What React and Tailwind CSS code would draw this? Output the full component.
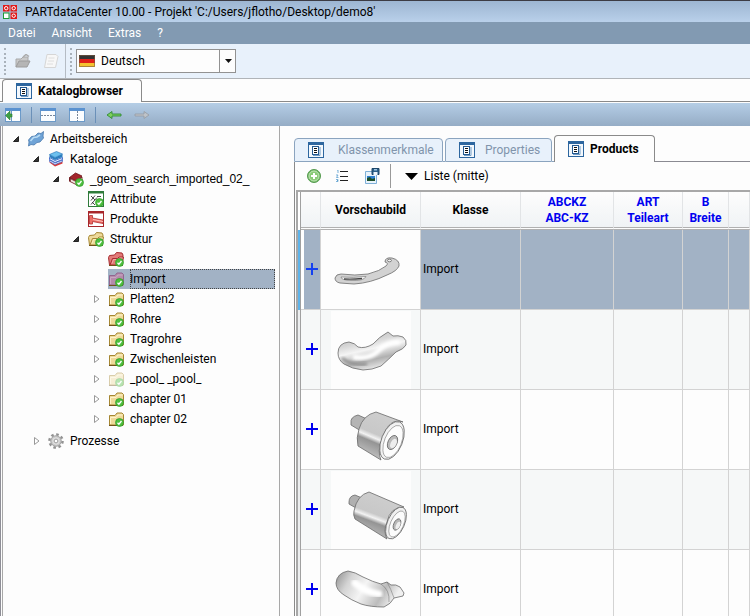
import { useState } from "react";

const Check = () => (
  <>
    <circle cx="11.5" cy="11.5" r="4" fill="#4fbf3f" stroke="#2f9a2a" strokeWidth="0.7" />
    <path d="M9.5 11.7l1.4 1.5 2.6-3.2" fill="none" stroke="#fff" strokeWidth="1.3" />
  </>
);

const FolderIcon = ({ fill = "#eed99a", line = "#a58632", shine = "#fff3c8", open, faded }) => (
  <svg viewBox="0 0 16 16" className={faded ? "size-4 opacity-40" : "size-4"}>
    {open ? (
      <>
        <path d="M1.500 14L.5 6.500l1-2 5-.5 2-2.500 5.500.5 1 2-1 10z" fill={fill} stroke={line} />
        <path d="M2 14L4.500 7.500h5l1.500-1.500h4.500L14 14z" fill={fill} stroke={line} />
        <path d="M4 12.500L5.500 8.500h4.500l1.500-1.500h3" fill="none" stroke={shine} strokeWidth="0.8" />
      </>
    ) : (
      <>
        <path d="M1.500 14V4.500H7l2-2.500h5l1.500 1.500V14z" fill={fill} stroke={line} />
        <path d="M2.500 13V6.500H8l2-2.500h4.500" fill="none" stroke={shine} />
      </>
    )}
    <path d="M1 14.500h14" stroke="#6f5418" />
    <Check />
  </svg>
);

const WorkspaceIcon = () => (
  <svg viewBox="0 0 16 16" className="size-4">
    <path
      d="M.5 15l.5-4-.5-2 3-3.500 3.500-.5L10 2l3 .5L15.500.5 15 5l.500 2-3.500 4-3 .5L6 14l-3-.500z"
      fill="#6fa3d6"
      stroke="#4a78ac"
      strokeWidth="0.8"
    />
    <path d="M2.500 10l3-3.500 3.500-.5L12 4" fill="none" stroke="#b9dcf5" strokeWidth="1.600" />
  </svg>
);

const CatalogsIcon = () => (
  <svg viewBox="0 0 16 16" className="size-4">
    <path d="M1.500 11.500l5.500 4 7.500-3v-2l-7.500 3-5.500-3z" fill="#d83a3a" />
    <path d="M1.500 9l5.500 3 7.500-3v1.500l-7.500 3-5.500-3z" fill="#fff" stroke="#3156c0" strokeWidth="0.7" />
    <path d="M1.500 6.500L7 9.500l7.500-3v2L7 11.500l-5.500-3z" fill="#e6f3fc" stroke="#1f4fc0" strokeWidth="0.8" />
    <path d="M1.500 3.500v2.500L7 9l7.500-3V3L7 6.500z" fill="#2c7fc0" />
    <path d="M1.500 3.500L8.500 .5l6 2.500L7 6.500z" fill="#6cc0ee" stroke="#1f6fb5" strokeWidth="0.6" />
  </svg>
);

const BookIcon = () => (
  <svg viewBox="0 0 16 16" className="size-4">
    <path d="M1.500 6.500L7.500 2l6.500 3-5 5.500z" fill="#a3262c" stroke="#6b1015" strokeWidth="0.8" />
    <path d="M2 7.500v3L9 14l5-5V6l-5 5z" fill="#f2e6e0" stroke="#6b1015" strokeWidth="0.8" />
    <path d="M1.800 6.500v4" stroke="#6b1015" strokeWidth="1.400" />
    <Check />
  </svg>
);

const AttributeIcon = () => (
  <svg viewBox="0 0 16 16" className="size-4">
    <rect x="0.500" y="0.500" width="15" height="15" fill="#fff" stroke="#2f7a3a" />
    <path d="M0 1.500h16" stroke="#2f7a3a" strokeWidth="2" />
    <path d="M3 5l4 4M7 4.500L3 9.500M3 13.500l6-7M9 5.500h4M4 11l3 3" stroke="#333" fill="none" strokeWidth="0.9" />
    <Check />
  </svg>
);

const ProductIcon = () => (
  <svg viewBox="0 0 16 16" className="size-4">
    <rect x="0.500" y="0.500" width="15" height="15" fill="#fff" stroke="#a8262a" />
    <path d="M0 1.500h16" stroke="#a8262a" strokeWidth="2" />
    <path d="M1.500 4.500h3v2.500l10.500 2v3.500L4.500 10.500V13h-3z" fill="#ee6d66" stroke="#b03030" strokeWidth="0.8" />
    <path d="M5 8.500l10 2" stroke="#ffc4be" />
  </svg>
);

const GearIcon = () => (
  <svg viewBox="0 0 16 16" className="size-4">
    <circle cx="8" cy="8" r="6.600" fill="none" stroke="#929292" strokeWidth="2.400" strokeDasharray="2.600 2.580" />
    <circle cx="8" cy="8" r="5.300" fill="#c9c9c9" stroke="#959595" strokeWidth="0.8" />
    <circle cx="8" cy="8" r="3.200" fill="none" stroke="#e6e6e6" />
    <circle cx="8" cy="8" r="1.800" fill="#fff" stroke="#999" strokeWidth="0.8" />
  </svg>
);

const PageIcon = () => (
  <svg viewBox="0 0 16 16" className="size-4 shrink-0">
    <rect x="0.500" y="0.500" width="15" height="15" fill="#f3f8fd" stroke="#2d669f" />
    <path d="M0 1.500h16" stroke="#2d669f" strokeWidth="3" />
    <path d="M5 13.500h7V5" fill="none" stroke="#6f9ac4" />
    <rect x="4.500" y="4.500" width="6" height="8" fill="#fff" stroke="#245a92" />
    <path d="M6 6.500h3M6 8.500h3M6 10.500h3" stroke="#111" />
  </svg>
);

const AppLogo = () => (
  <svg viewBox="0 0 14 14" className="size-3.5">
    <rect width="6.500" height="6.500" fill="#e01818" />
    <rect x="7.500" width="6.500" height="6.500" fill="#e01818" />
    <rect x="7.500" y="7.500" width="6.500" height="6.500" fill="#e01818" />
    <rect x="0.500" y="8" width="5.500" height="5.500" fill="#fff" stroke="#1d9a35" />
    <g fill="none" stroke="#fff">
      <circle cx="3.200" cy="3.200" r="1.700" />
      <circle cx="10.700" cy="3.200" r="1.700" />
      <circle cx="10.700" cy="10.700" r="1.700" />
    </g>
  </svg>
);

const PaneIcon = ({ split }) => (
  <svg viewBox="0 0 16 14" className="h-3.5 w-4">
    <rect x="0.500" y="0.500" width="15" height="13" fill="#fbfdff" stroke="#6c9ac8" />
    <path d="M0 1.500h16" stroke="#5a92d0" strokeWidth="3" />
    {split === "rows" && <path d="M1 7.500h14" stroke="#77869a" strokeDasharray="2 1" />}
    {split === "cols" && <path d="M8.500 3v10" stroke="#77869a" strokeDasharray="2 1" />}
    {split === "dock" && (
      <>
        <path d="M6.500 3v10" stroke="#6c9ac8" />
        <path d="M.5 7.500L5 3v3h2v3H5v3z" fill="#3da046" stroke="#2a7a30" strokeWidth="0.600" />
      </>
    )}
  </svg>
);

const ArrowIcon = ({ forward }) => (
  <svg viewBox="0 0 16 8" className="h-2 w-4">
    {forward ? (
      <path d="M1 3h9V.5L15 4l-5 3.500V5H1z" fill="#bfc3c8" stroke="#959ba2" strokeWidth="0.800" />
    ) : (
      <path d="M15 3H6V.5L1 4l5 3.500V5h9z" fill="#7dcf5e" stroke="#2f8a35" strokeWidth="0.900" />
    )}
  </svg>
);

const treeItems = [
  {
    text: "Arbeitsbereich",
    icon: <WorkspaceIcon />,
    state: "open",
    children: [
      {
        text: "Kataloge",
        icon: <CatalogsIcon />,
        state: "open",
        children: [
          {
            text: "_geom_search_imported_02_",
            icon: <BookIcon />,
            state: "open",
            plain: true,
            children: [
              { text: "Attribute", icon: <AttributeIcon /> },
              { text: "Produkte", icon: <ProductIcon /> },
              {
                text: "Struktur",
                icon: <FolderIcon open />,
                state: "open",
                children: [
                  { text: "Extras", icon: <FolderIcon open fill="#e27a78" line="#a62c30" shine="#f6b8b4" /> },
                  { text: "Import", icon: <FolderIcon fill="#b48bab" line="#91658f" shine="#c9a6c4" /> },
                  { text: "Platten2", icon: <FolderIcon />, state: "closed" },
                  { text: "Rohre", icon: <FolderIcon />, state: "closed" },
                  { text: "Tragrohre", icon: <FolderIcon />, state: "closed" },
                  { text: "Zwischenleisten", icon: <FolderIcon />, state: "closed" },
                  { text: "_pool_ _pool_", icon: <FolderIcon faded />, state: "closed" },
                  { text: "chapter 01", icon: <FolderIcon />, state: "closed" },
                  { text: "chapter 02", icon: <FolderIcon />, state: "closed" },
                ],
              },
            ],
          },
        ],
      },
      { text: "Prozesse", icon: <GearIcon />, state: "closed", spaced: true },
    ],
  },
];

const Expander = ({ state }) => (
  <svg viewBox="0 0 8 8" className="mr-[7px] size-2 shrink-0">
    {state === "open" && <path d="M5.500 1.500v5H.5z" fill="#333" stroke="#222" />}
    {state === "closed" && <path d="M1.500 .5l4.500 3.500-4.500 3.500z" fill="#fff" stroke="#999" />}
  </svg>
);

const Tree = ({ items, selected, onSelect }) => (
  <ul>
    {items.map((item) => {
      const active = item.text === selected;
      return (
        <li key={item.text} className={item.spaced ? "mt-0.5" : ""}>
          <button onClick={() => onSelect(item.text)} className="flex h-5 w-full items-center">
            <Expander state={item.state} />
            <span className={`flex h-5 w-[22px] shrink-0 items-center ${active ? "bg-[#a2b2c5]" : ""}`}>
              {item.icon}
            </span>
            <span
              className={`flex h-5 items-center whitespace-nowrap ${
                active ? "mr-1 flex-1 bg-[#a2b2c5] outline-1 -outline-offset-1 outline-dotted outline-[#444]" : ""
              } ${item.plain ? "font-['Liberation_Sans',sans-serif]" : ""}`}
            >
              {item.text}
            </span>
          </button>
          {item.children && (
            <div className="pl-5">
              <Tree items={item.children} selected={selected} onSelect={onSelect} />
            </div>
          )}
        </li>
      );
    })}
  </ul>
);

const Gradients = () => (
  <svg className="absolute size-0" aria-hidden="true">
    <defs>
      <linearGradient id="metal" x1="0" y1="0" x2="0.4" y2="1">
        <stop offset="0" stopColor="#b8b8b8" />
        <stop offset="0.350" stopColor="#d4d4d4" />
        <stop offset="0.550" stopColor="#f4f4f4" />
        <stop offset="0.800" stopColor="#b0b0b0" />
        <stop offset="1" stopColor="#e4e4e4" />
      </linearGradient>
      <linearGradient id="barrel" x1="0.700" y1="0" x2="0.300" y2="1">
        <stop offset="0" stopColor="#cfcfcf" />
        <stop offset="0.500" stopColor="#c8c8c8" />
        <stop offset="0.580" stopColor="#f2f2f2" />
        <stop offset="0.660" stopColor="#949494" />
        <stop offset="1" stopColor="#c9c9c9" />
      </linearGradient>
      <linearGradient id="tube" x1="0" y1="0" x2="1" y2="0.300">
        <stop offset="0" stopColor="#8d8d8d" />
        <stop offset="0.250" stopColor="#d4d4d4" />
        <stop offset="0.500" stopColor="#f4f4f4" />
        <stop offset="0.800" stopColor="#bcbcbc" />
        <stop offset="1" stopColor="#f0f0f0" />
      </linearGradient>
      <filter id="soft" x="-20%" y="-20%" width="140%" height="140%">
        <feGaussianBlur stdDeviation="1.500" />
      </filter>
    </defs>
  </svg>
);

const parts = [
  <g key="lever">
    <path
      d="M4 47Q5 43 10 43Q24 45 37 43Q49 40 55 35Q58 32 54 31Q54 26 61 27Q69 29 68 35Q66 40 56 44Q40 52 23 53L9 52Q4 51 4 47z"
      fill="#d2d2d2"
    />
    <path d="M10 46Q22 47 35 45.500Q33 50 20 49.500Q10 49 10 46z" fill="#fff" strokeWidth="0.6" />
    <path d="M13 48Q22 48.500 31 47.500" stroke="#444" strokeWidth="1.400" />
    <ellipse cx="58.500" cy="29.500" rx="2" ry="1.300" fill="#eee" />
  </g>,
  <g key="grip">
    <path
      d="M7 42Q7 32 18 31Q24 32 27 36Q34 38 42 33Q48 26 57 21L62 25Q67 24 72 26Q76 29 75 34Q73 38 65 41Q58 48 50 55Q41 59 32 59Q21 58 13 53Q7 49 7 42z"
      fill="url(#metal)"
    />
    <path d="M22 46Q40 49 49 38Q56 31 69 31" stroke="#fff" strokeWidth="5" filter="url(#soft)" />
    <path d="M11 47Q20 55 36 53" stroke="#888" strokeWidth="2.500" filter="url(#soft)" />
  </g>,
  <g key="knob">
    <path d="M20 32Q19 26 27 24L36 28L30 40L20 34z" fill="#b4b4b4" />
    <path d="M28 38Q32 24 45 21L72 31Q58 26 51 48Q46 61 50 69L27 55Q25 47 28 38z" fill="url(#barrel)" />
    <ellipse cx="61" cy="49.500" rx="10.500" ry="20" transform="rotate(22 61 49.500)" fill="#f1f1f1" />
    <ellipse cx="62" cy="50.500" rx="8.500" ry="17" transform="rotate(22 62 50.500)" fill="#fdfdfd" strokeWidth="0.5" />
    <ellipse cx="61.500" cy="51.500" rx="4.500" ry="7.500" transform="rotate(25 61.500 51.500)" fill="#bbb" />
    <ellipse cx="62.500" cy="52.500" rx="2.800" ry="5" transform="rotate(25 62.500 52.500)" fill="#eee" stroke="none" />
  </g>,
  <g key="longknob">
    <path d="M18 31Q18 25 24 24L31 27L25 37L18 33z" fill="#b0b0b0" />
    <path d="M23 40Q26 24 38 21L73 36Q59 36 56 51Q52 60 56 68L24 48Q22 44 23 40z" fill="url(#barrel)" />
    <ellipse cx="65" cy="52" rx="8.500" ry="17" transform="rotate(24 65 52)" fill="#f0f0f0" />
    <ellipse cx="66" cy="53" rx="6.500" ry="14" transform="rotate(24 66 53)" fill="#fcfcfc" strokeWidth="0.5" />
    <ellipse cx="66" cy="53.500" rx="3.300" ry="6" transform="rotate(24 66 53.500)" fill="#b8b8b8" />
    <ellipse cx="67" cy="54.500" rx="2" ry="4" transform="rotate(24 67 54.500)" fill="#eee" stroke="none" />
  </g>,
  <g key="handle">
    <path
      d="M5 32Q6 22 17 20Q24 21 32 26Q42 31 50 33L56 31L60 34Q65 33 69 36L73 42L72 45L63 47Q60 53 53 56Q39 56 30 53Q20 49 13 44Q5 39 5 32z"
      fill="url(#tube)"
    />
    <path d="M24 32Q36 42 48 43" stroke="#fff" strokeWidth="7" strokeLinecap="round" filter="url(#soft)" />
    <path d="M50 33Q59 39 58 51M56 31Q60 38 63 47" strokeWidth="0.5" />
  </g>,
];

const PartImage = ({ part }) => (
  <svg
    viewBox="0 0 80 78"
    className="ml-2.5 h-[78px] w-20 bg-[#fdfdfd]"
    fill="none"
    stroke="#6a6a6a"
    strokeWidth="0.8"
  >
    {part}
  </svg>
);

const columns = [
  { lines: ["Vorschaubild"] },
  { lines: ["Klasse"] },
  { lines: ["ABCKZ", "ABC-KZ"], blue: true },
  { lines: ["ART", "Teileart"], blue: true },
  { lines: ["B", "Breite"], blue: true },
  { lines: [] },
];

const ProductTable = () => (
  <table className="w-full table-fixed border-separate border-spacing-0">
    <colgroup>
      <col className="w-[3px]" />
      <col className="w-5" />
      <col className="w-[100px]" />
      <col className="w-[100px]" />
      <col className="w-[93px]" />
      <col className="w-[69px]" />
      <col className="w-[46px]" />
      <col />
    </colgroup>
    <thead>
      <tr className="h-[38px]">
        <th className="border-r border-r-[#a0a0a0] bg-white p-0" />
        <th className="border-r border-b-3 border-double border-r-[#e2e4e6] border-b-[#b0b0b0] bg-linear-to-b from-[#fdfdfd] to-[#f0f3f5] p-0" />
        {columns.map((col, i) => (
          <th
            key={i}
            className={`border-r border-b-3 border-double border-r-[#e2e4e6] border-b-[#b0b0b0] bg-linear-to-b from-[#fdfdfd] to-[#f0f3f5] p-0 leading-4 font-bold whitespace-nowrap ${
              col.blue ? "text-[#0000f0]" : "text-black"
            }`}
          >
            {col.lines.map((line) => (
              <div key={line}>{line}</div>
            ))}
          </th>
        ))}
      </tr>
    </thead>
    <tbody>
      {parts.map((part, i) => {
        const rowBg = i === 0 ? "bg-[#a2b2c5]" : i % 2 ? "bg-[#f6f8f8]" : "bg-[#fdfdfd]";
        const cell = `border-r border-b border-[#d3d3d3] p-0 ${rowBg}`;
        return (
          <tr key={i} className="h-20">
            <td className={`border-r border-[#a0a0a0] p-0 ${i === 0 ? "bg-[#5fb4ea]" : "bg-[#eceeef]"}`} />
            <td
              className={
                i === 0
                  ? "border-r border-b border-[#d3d3d3] bg-[linear-gradient(to_right,#fff_3px,#a2b2c5_3px)] p-0"
                  : cell
              }
            >
              <button aria-label="Aufklappen" className="flex w-full justify-center pb-0.5 pl-0.5">
                <svg viewBox="0 0 12 12" className="size-3">
                  <path d="M0 6h12M6 0v12" stroke={i === 0 ? "#1440f0" : "#0000f0"} strokeWidth="2" />
                </svg>
              </button>
            </td>
            <td className={i === 0 ? "border-r border-b border-[#d3d3d3] bg-[#fdfdfd] p-0" : cell}>
              <PartImage part={part} />
            </td>
            <td className={`${cell} pb-0.5 pl-0.5`}>Import</td>
            <td className={cell} />
            <td className={cell} />
            <td className={cell} />
            <td className={cell} />
          </tr>
        );
      })}
    </tbody>
  </table>
);

const Grip = () => <div className="h-[27px] border-l-2 border-dotted border-[#a9b2bb]" />;

const App = () => {
  const [selected, setSelected] = useState("Import");
  return (
    <div className="flex h-screen flex-col overflow-hidden bg-[#fdfdfd] font-[Roboto,sans-serif] text-xs text-black">
      <Gradients />
      <header>
        <div className="flex h-[22px] items-center gap-2 border-t border-[#3c3c44] bg-linear-to-b from-[#9db6d2] to-[#b9d0ea] pl-[3px]">
          <AppLogo />
          <h1 className="whitespace-nowrap">PARTdataCenter 10.00 - Projekt 'C:/Users/jflotho/Desktop/demo8'</h1>
        </div>
        <nav className="flex h-[22px] items-center gap-4 bg-[#829ab2] pl-2 text-white">
          <button>Datei</button>
          <button>Ansicht</button>
          <button>Extras</button>
          <button>?</button>
        </nav>
      </header>

      <div className="flex h-[35px] shrink-0 items-center border-b border-[#b0b4b8] bg-[#e8f1fb] pl-1">
        <Grip />
        <button aria-label="Öffnen" className="ml-[9px]">
          <svg viewBox="0 0 16 14" className="h-3.5 w-4">
            <path d="M1 13V5h5l2-2h5v4" fill="#c9c9c9" stroke="#a9a9a9" />
            <path d="M1 13l3-6h11l-3 6z" fill="#b5b5b5" stroke="#9c9c9c" />
            <path d="M8 3l3-2.500 3 2" fill="none" stroke="#aaa" strokeWidth="1.500" />
          </svg>
        </button>
        <button aria-label="Neu" className="ml-3">
          <svg viewBox="0 0 16 16" className="size-4">
            <path d="M4 1.500h9l2 2-2.500 11h-11z" fill="#f7f7f7" stroke="#d6d6d6" />
            <path d="M5.500 5h6M5 8h6M4 11h6" stroke="#dedede" />
          </svg>
        </button>
        <div className="mr-1 ml-1.5 h-full border-l border-[#b5bcc4]" />
        <Grip />
        <div className="relative ml-1 h-6 w-40">
          <select
            aria-label="Sprache"
            className="h-6 w-full appearance-none border border-[#929292] bg-[#fdfdfd] pl-6 text-xs"
          >
            <option>Deutsch</option>
            <option>English</option>
          </select>
          <svg viewBox="0 0 16 12" className="pointer-events-none absolute top-1.5 left-[3px] h-3 w-4">
            <path d="M0 0h16v4H0z" fill="#333" />
            <path d="M0 4h16v4H0z" fill="#e02018" />
            <path d="M0 8h16v4H0z" fill="#f4c330" />
            <path d="M.5 .5h15v11H.5z" fill="none" stroke="#7a5a40" strokeOpacity="0.600" />
          </svg>
          <div className="pointer-events-none absolute inset-y-0 right-0 flex w-[17px] items-center justify-center border-l border-[#929292]">
            <svg viewBox="0 0 7 4" className="h-1 w-[7px]">
              <path d="M0 0h7L3.500 4z" fill="#111" />
            </svg>
          </div>
        </div>
      </div>

      <div className="flex h-[23px] shrink-0">
        <div className="w-0.5 border-b border-[#8a8a8a]" />
        <button className="flex w-[140px] items-center gap-1.5 rounded-t border-x border-t border-[#8a8a8a] pl-[13px] font-bold">
          <PageIcon />
          Katalogbrowser
        </button>
        <div className="flex-1 border-b border-[#8a8a8a]" />
      </div>

      <div className="mt-px flex h-[23px] shrink-0 items-center bg-linear-to-b from-[#b5cee6] to-[#95acc5] pl-[5px]">
        <button aria-label="Andocken"><PaneIcon split="dock" /></button>
        <div className="ml-2.5 h-4 border-l border-[#6b90b8]" />
        <button aria-label="Horizontal teilen" className="ml-2"><PaneIcon split="rows" /></button>
        <button aria-label="Vertikal teilen" className="ml-[13px]"><PaneIcon split="cols" /></button>
        <div className="ml-2.5 h-4 border-l border-[#6b90b8]" />
        <button aria-label="Zurück" className="ml-2.5"><ArrowIcon /></button>
        <button aria-label="Vor" className="ml-3"><ArrowIcon forward /></button>
      </div>

      <div className="flex min-h-0 flex-1 border-l border-[#8f8f97]">
        <aside className="ml-px w-[278px] shrink-0 overflow-hidden border-x border-[#a8a8a8] pt-[3px] pl-2.5">
          <Tree items={treeItems} selected={selected} onSelect={setSelected} />
        </aside>

        <main className="ml-3.5 flex min-w-0 flex-1 flex-col pt-[9px]">
          <div className="flex h-[27px] shrink-0 items-end">
            <button className="flex h-6 w-[149px] items-center gap-3.5 rounded-t border border-[#8ba4bf] bg-[#e8f1fb] pl-[13px] text-[#8094ab]">
              <PageIcon />
              Klassenmerkmale
            </button>
            <div className="w-0.5 border-b border-[#8ba4bf]" />
            <button className="flex h-6 w-[107px] items-center gap-2.5 rounded-t border border-[#8ba4bf] bg-[#e8f1fb] pl-[13px] text-[#8094ab]">
              <PageIcon />
              Properties
            </button>
            <div className="w-0.5 border-b border-[#8ba4bf]" />
            <button className="flex h-[27px] w-[101px] items-center gap-1.5 rounded-t border-x border-t border-[#8a8a8a] pl-[13px] font-bold">
              <PageIcon />
              Products
            </button>
            <div className="flex-1 border-b border-[#8a8a92]" />
          </div>

          <div className="flex min-h-0 flex-1 flex-col border-l border-[#8a8a8a]">
            <div className="flex h-7 shrink-0 items-center pl-3">
              <button aria-label="Hinzufügen">
                <svg viewBox="0 0 14 14" className="size-3.5">
                  <circle cx="7" cy="7" r="6.500" fill="#6db560" stroke="#559a50" />
                  <circle cx="7" cy="7" r="5" fill="#8acb78" stroke="#c2e6b8" />
                  <path d="M7 4v6M4 7h6" stroke="#fff" strokeWidth="2" />
                </svg>
              </button>
              <button aria-label="Nummerierung" className="ml-[15px]">
                <svg viewBox="0 0 12 12" className="size-3">
                  <path d="M4 1.500h8M4 6.500h8M4 10.500h8" stroke="#222" />
                  <path d="M1 0h1v3M0 5h2L.5 7.500H2.500M0 9.500h2v1H1h1v1H0" fill="none" stroke="#5c9fcf" strokeWidth="0.800" />
                </svg>
              </button>
              <button aria-label="Bild speichern" className="ml-4">
                <svg viewBox="0 0 16 16" className="size-4">
                  <path d="M1.500 3.500h11v12h-11z" fill="#e9f3fb" stroke="#7fb0d8" />
                  <path d="M3 8h8v5H3z" fill="#2c7fd0" />
                  <path d="M3 13v-3l3-1 2 2 3-1v3z" fill="#1d4f2a" />
                  <path d="M8 .5h7v6H8z" fill="#2b5f88" stroke="#1d4668" />
                  <path d="M9.500 4h4v3h-4z" fill="#eef5fb" />
                  <path d="M10 1h3v1.500h-3z" fill="#9fc4e2" />
                </svg>
              </button>
              <div className="mr-3.5 ml-2.5 h-6 border-l border-[#999]" />
              <button className="flex items-center gap-1.5">
                <svg viewBox="0 0 13 7" className="h-[7px] w-[13px]">
                  <path d="M0 0h13L6.500 7z" fill="#000" />
                </svg>
                Liste (mitte)
              </button>
            </div>
            <div className="ml-px min-h-0 flex-1 overflow-hidden border-t-2 border-l-2 border-[#a8a8a8]">
              <ProductTable />
            </div>
          </div>
        </main>
      </div>
    </div>
  );
};

export default App;
